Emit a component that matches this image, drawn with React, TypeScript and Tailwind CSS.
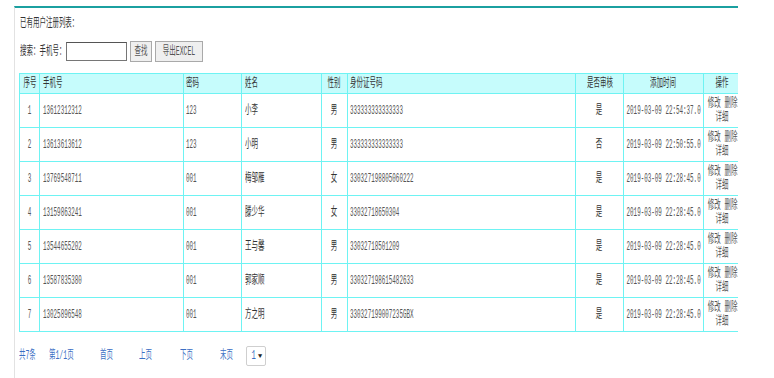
import React from "react";

type User = {
  id: number;
  phone: string;
  pwd: string;
  name: string;
  sex: string;
  card: string;
  audit: string;
  time: string;
};

const users: User[] = [
  { id: 1, phone: "13612312312", pwd: "123", name: "小李", sex: "男", card: "333333333333333", audit: "是", time: "2019-03-09 22:54:37.0" },
  { id: 2, phone: "13613613612", pwd: "123", name: "小明", sex: "男", card: "333333333333333", audit: "否", time: "2019-03-09 22:50:55.0" },
  { id: 3, phone: "13769548711", pwd: "001", name: "梅邹雁", sex: "女", card: "330327198805060222", audit: "是", time: "2019-03-09 22:28:45.0" },
  { id: 4, phone: "13159863241", pwd: "001", name: "滕少华", sex: "女", card: "33032718650304", audit: "是", time: "2019-03-09 22:28:45.0" },
  { id: 5, phone: "13544655202", pwd: "001", name: "王与馨", sex: "男", card: "33032718501209", audit: "是", time: "2019-03-09 22:28:45.0" },
  { id: 6, phone: "13587835380", pwd: "001", name: "郭家顺", sex: "男", card: "330327198615482633", audit: "是", time: "2019-03-09 22:28:45.0" },
  { id: 7, phone: "13025896548", pwd: "001", name: "方之明", sex: "男", card: "330327199007235GBX", audit: "是", time: "2019-03-09 22:28:45.0" },
];

// the old page font is narrow, so text is squeezed sideways
const L = ({ children }: { children: React.ReactNode }) => (
  <span className="inline-block whitespace-nowrap origin-left scale-x-[0.54]">{children}</span>
);

const C = ({ children }: { children: React.ReactNode }) => (
  <div className="flex justify-center">
    <span className="inline-block whitespace-nowrap scale-x-[0.54]">{children}</span>
  </div>
);

// digits are a bit narrower still
const LN = ({ children }: { children: React.ReactNode }) => (
  <span className="inline-block whitespace-nowrap origin-left scale-x-[0.49] text-[#555]">{children}</span>
);

const CN = ({ children }: { children: React.ReactNode }) => (
  <div className="flex justify-center">
    <span className="inline-block whitespace-nowrap scale-x-[0.49] text-[#555]">{children}</span>
  </div>
);

const th = "h-[20px] p-0 border border-[#6ef3f3] bg-[#c6fcfc] font-normal";
const td = "h-[34px] p-0 border border-[#6ef3f3]";

export default function App() {
  return (
    <div
      className="min-h-screen bg-white pt-[6px] pl-[14px] text-[12px] leading-[16px] text-[#333]"
      style={{ fontFamily: '"Liberation Mono", "Noto Sans CJK SC", monospace' }}
    >
      <div className="relative w-[724px] h-[372px] overflow-hidden border-t-2 border-l border-t-[#1ba0a0] border-l-[#e2e2e2]">
        <span className="absolute left-[-1px] top-[164px] w-px h-[38px] bg-[#7aa6cc]" />
        <div className="pl-[5px] pt-[8px]">
          <L>已有用户注册列表：</L>
        </div>

        <div className="flex items-center mt-[9px] pl-[5px] h-[21px]">
          <span className="w-[46px]">
            <L>搜索：手机号：</L>
          </span>
          <input className="w-[61px] h-[19px] border border-[#767676] border-t-[#555] bg-white outline-none" />
          <button className="ml-[3px] w-[22px] h-[21px] border border-[#a9a9a9] bg-[#efefef] text-[#555] flex justify-center items-center">
            <span className="inline-block whitespace-nowrap scale-x-[0.54]">查找</span>
          </button>
          <button className="ml-[3px] w-[48px] h-[21px] border border-[#a9a9a9] bg-[#efefef] text-[#555] flex justify-center items-center">
            <span className="inline-block whitespace-nowrap scale-x-[0.54]">导出EXCEL</span>
          </button>
        </div>

        <table className="ml-[4px] mt-[11px] w-[722px] table-fixed border-collapse">
          <colgroup>
            <col className="w-[20px]" />
            <col className="w-[144px]" />
            <col className="w-[58px]" />
            <col className="w-[80px]" />
            <col className="w-[26px]" />
            <col className="w-[228px]" />
            <col className="w-[48px]" />
            <col className="w-[80px]" />
            <col className="w-[38px]" />
          </colgroup>
          <thead>
            <tr>
              <th className={th}><C>序号</C></th>
              <th className={th + " text-left pl-[3px]"}><L>手机号</L></th>
              <th className={th + " text-left pl-[2px]"}><L>密码</L></th>
              <th className={th + " text-left pl-[3px]"}><L>姓名</L></th>
              <th className={th}><C>性别</C></th>
              <th className={th + " text-left pl-[2px]"}><L>身份证号码</L></th>
              <th className={th}><C>是否审核</C></th>
              <th className={th}><C>添加时间</C></th>
              <th className={th}><C>操作</C></th>
            </tr>
          </thead>
          <tbody>
            {users.map((u) => (
              <tr key={u.id}>
                <td className={td}><CN>{u.id}</CN></td>
                <td className={td + " pl-[3px]"}><LN>{u.phone}</LN></td>
                <td className={td + " pl-[2px]"}><LN>{u.pwd}</LN></td>
                <td className={td + " pl-[3px]"}><L>{u.name}</L></td>
                <td className={td}><C>{u.sex}</C></td>
                <td className={td + " pl-[2px]"}><LN>{u.card}</LN></td>
                <td className={td}><C>{u.audit}</C></td>
                <td className={td}><CN>{u.time}</CN></td>
                <td className={td + " text-[#555] leading-[14px]"}>
                  <C>修改 删除</C>
                  <C>详细</C>
                </td>
              </tr>
            ))}
          </tbody>
        </table>

        <div className="flex items-center mt-[14px] pl-[4px] h-[20px] text-[#3b6fc4]">
          <span className="w-[30px]"><L>共7条</L></span>
          <span className="w-[51px]"><L>第1/1页</L></span>
          <span className="w-[39px]"><L>首页</L></span>
          <span className="w-[41px]"><L>上页</L></span>
          <span className="w-[40px]"><L>下页</L></span>
          <span className="w-[26px]"><L>末页</L></span>
          <div className="w-[20px] h-[20px] border border-[#cfcfcf] rounded-[2px] flex items-center justify-center gap-[1px] text-[#222]">
            <span className="inline-block scale-x-[0.6] text-[#3b6fc4]">1</span>
            <span className="text-[7px] leading-none">▼</span>
          </div>
        </div>
      </div>
    </div>
  );
}
